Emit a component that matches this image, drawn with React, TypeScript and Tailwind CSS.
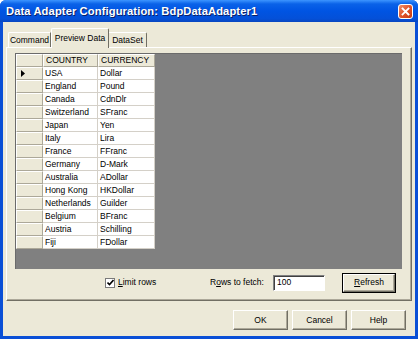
import React from "react";

const rows: [string, string][] = [
  ["USA", "Dollar"],
  ["England", "Pound"],
  ["Canada", "CdnDlr"],
  ["Switzerland", "SFranc"],
  ["Japan", "Yen"],
  ["Italy", "Lira"],
  ["France", "FFranc"],
  ["Germany", "D-Mark"],
  ["Australia", "ADollar"],
  ["Hong Kong", "HKDollar"],
  ["Netherlands", "Guilder"],
  ["Belgium", "BFranc"],
  ["Austria", "Schilling"],
  ["Fiji", "FDollar"],
];

function Btn({ children, w, def }: { children: React.ReactNode; w: string; def?: boolean }) {
  return (
    <div
      className={`${w} h-[20px] flex items-center justify-center bg-[#ece9d8] ${
        def ? "border border-black" : ""
      }`}
    >
      <div className="w-full h-full flex items-center justify-center border border-t-white border-l-white border-r-[#716f64] border-b-[#716f64] shadow-[inset_-1px_-1px_0_#aca899] text-[8.5px] text-black">
        {children}
      </div>
    </div>
  );
}

export default function App() {
  return (
    <div
      className="w-[418px] h-[339px] flex flex-col bg-[#0a4fd6] rounded-t-[6px] overflow-hidden"
      style={{ fontFamily: '"Liberation Sans", Arial, sans-serif' }}
    >
      {/* Title bar */}
      <div className="h-[22px] flex items-center justify-between pl-[6px] pr-[5px] bg-[linear-gradient(180deg,#3d95ff_0%,#0a62e8_18%,#0054e3_50%,#0450d8_85%,#0846c0_100%)]">
        <span className="text-white font-bold text-[11.2px] tracking-[0.1px] [text-shadow:1px_1px_0_#0a1f66]">
          Data Adapter Configuration: BdpDataAdapter1
        </span>
        <div className="w-[15px] h-[15px] rounded-[3px] border border-white bg-[linear-gradient(135deg,#f0906a_0%,#e0542a_50%,#c53a12_100%)] flex items-center justify-center">
          <svg width="9" height="9" viewBox="0 0 9 9">
            <path d="M1.5 1.5 L7.5 7.5 M7.5 1.5 L1.5 7.5" stroke="white" strokeWidth="1.8" strokeLinecap="square" />
          </svg>
        </div>
      </div>

      {/* Body */}
      <div className="flex-1 mx-[3px] mb-[3px] bg-[#ece9d8] flex flex-col">
        {/* Tabs */}
        <div className="mt-[6px] h-[19px] flex items-end pl-[5px] relative z-10 text-[8.5px] text-black">
          <div className="w-[43px] h-[15px] flex items-center justify-center border-t border-l border-t-white border-l-white border-r border-r-[#716f64] rounded-tl-[2px]">
            Command
          </div>
          <div className="w-[58px] h-[20px] -mb-[1px] flex items-start pt-[3px] justify-center bg-[#ece9d8] border-t border-l border-t-white border-l-white border-r border-r-[#716f64] rounded-t-[2px]">
            Preview Data
          </div>
          <div className="w-[38px] h-[15px] flex items-center justify-center border-t border-t-white border-r border-r-[#716f64] rounded-tr-[2px]">
            DataSet
          </div>
        </div>

        {/* Panel */}
        <div className="ml-[3px] w-[406px] h-[254px] border border-t-white border-l-white border-r-[#716f64] border-b-[#716f64] shadow-[inset_-1px_-1px_0_#aca899] flex flex-col pl-[8px] pt-[5px]">
          {/* Grid area */}
          <div className="w-[387px] h-[216px] bg-[#808080] border-t border-l border-t-[#6b6b6b] border-l-[#6b6b6b]">
            <div className="w-[139px] flex flex-col text-[8.5px] text-black">
              <div className="flex h-[13px]">
                <div className="w-[27px] h-full bg-[#ece9d8] border border-t-white border-l-white border-r-[#aca899] border-b-[#aca899]" />
                <div className="w-[55px] h-full bg-[#ece9d8] border border-t-white border-l-white border-r-[#aca899] border-b-[#aca899] pl-[2px] flex items-center leading-none">
                  COUNTRY
                </div>
                <div className="w-[57px] h-full bg-[#ece9d8] border border-t-white border-l-white border-r-[#aca899] border-b-[#aca899] pl-[2px] flex items-center leading-none">
                  CURRENCY
                </div>
              </div>
              {rows.map(([c, cur], i) => (
                <div key={c} className="flex h-[13px]">
                  <div className="w-[27px] h-full bg-[#ece9d8] border border-t-white border-l-white border-r-[#aca899] border-b-[#aca899] flex items-center pl-[4px]">
                    {i === 0 && (
                      <svg width="4" height="7" viewBox="0 0 4 7">
                        <path d="M0 0 L4 3.5 L0 7 Z" fill="black" />
                      </svg>
                    )}
                  </div>
                  <div className="w-[55px] h-full bg-white border-r border-b border-r-[#d4d0c8] border-b-[#d4d0c8] pl-[2px] flex items-center leading-none">
                    {c}
                  </div>
                  <div className="w-[57px] h-full bg-white border-r border-b border-r-[#d4d0c8] border-b-[#d4d0c8] pl-[2px] flex items-center leading-none">
                    {cur}
                  </div>
                </div>
              ))}
            </div>
          </div>

          {/* Controls row */}
          <div className="mt-[4px] h-[19px] flex items-center text-[8.5px] text-black">
            <div className="ml-[90px] w-[10px] h-[10px] bg-white border border-[#7a7a7a] flex items-center justify-center">
              <svg width="7" height="7" viewBox="0 0 7 7">
                <path d="M0.5 3.5 L2.5 5.5 L6.5 1" stroke="black" strokeWidth="1.6" fill="none" />
              </svg>
            </div>
            <span className="ml-[3px] w-[92px]">
              <span className="underline">L</span>imit rows
            </span>
            <span className="w-[63px]">
              R<span className="underline">o</span>ws to fetch:
            </span>
            <div className="w-[52px] h-[16px] bg-white border border-t-[#808080] border-l-[#808080] border-r-white border-b-white shadow-[inset_1px_1px_0_#404040] pl-[3px] flex items-center">
              100
            </div>
            <div className="ml-[17px]">
              <Btn w="w-[54px]" def>
                <span>
                  <span className="underline">R</span>efresh
                </span>
              </Btn>
            </div>
          </div>
        </div>

        {/* Bottom buttons */}
        <div className="mt-[9px] flex justify-end gap-[4px] pr-[9px]">
          <Btn w="w-[55px]">OK</Btn>
          <Btn w="w-[55px]">Cancel</Btn>
          <Btn w="w-[55px]">Help</Btn>
        </div>
      </div>
    </div>
  );
}
